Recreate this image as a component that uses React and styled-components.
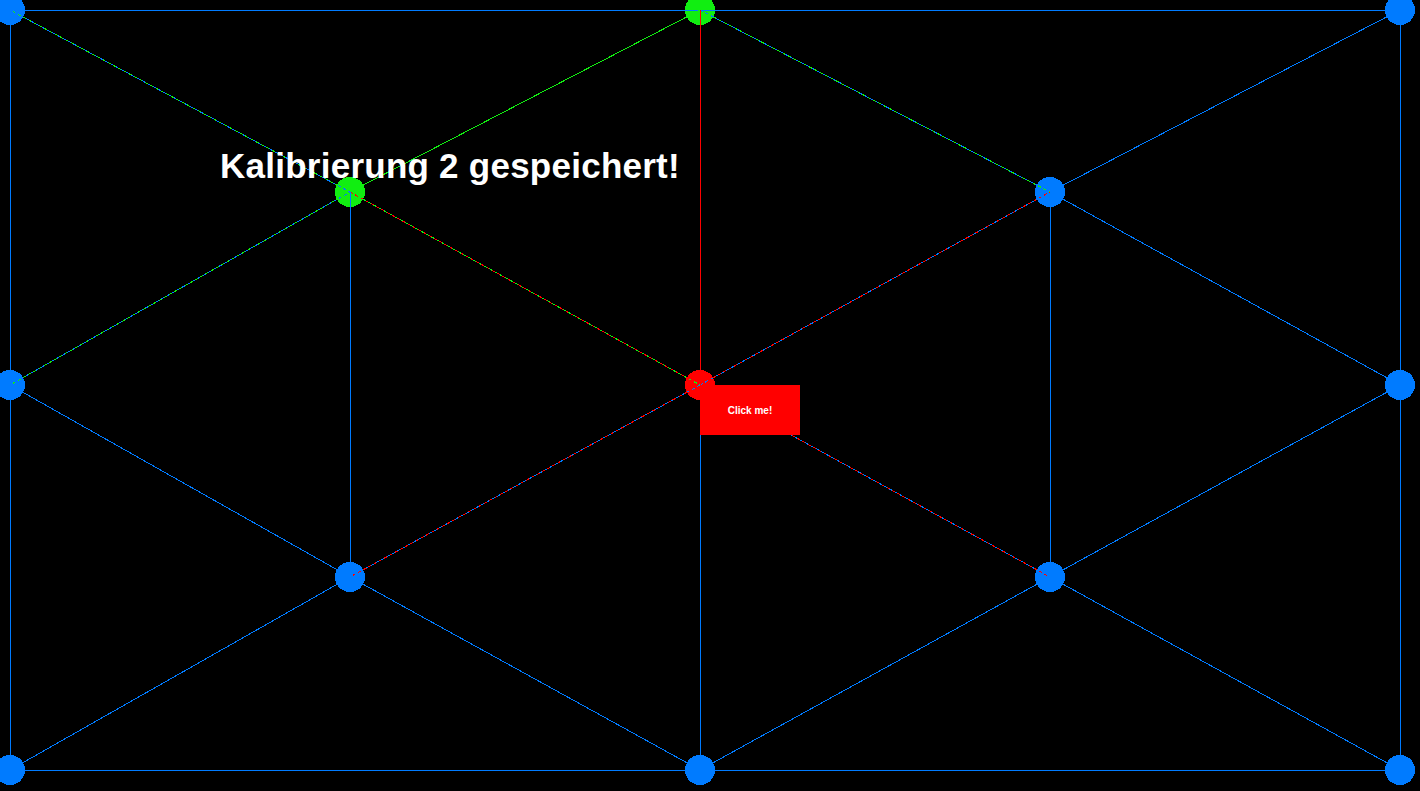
import React from "react";
import styled, { createGlobalStyle } from "styled-components";

const Global = createGlobalStyle`
  html, body { margin: 0; padding: 0; background: #000; }
  body { width: 1420px; height: 791px; overflow: hidden; font-family: "Liberation Sans", Arial, sans-serif; }
`;

const Stage = styled.div`
  position: relative;
  width: 1420px;
  height: 791px;
  background: #000;
`;

const Mesh = styled.svg`
  position: absolute;
  inset: 0;
  display: block;
`;

const Message = styled.div`
  position: absolute;
  left: ${(p) => p.$x}px;
  top: ${(p) => p.$y}px;
  color: #fff;
  font-family: "Liberation Sans", Arial, sans-serif;
  font-weight: bold;
  font-size: 35px;
  letter-spacing: 0.25px;
  line-height: 1;
  white-space: nowrap;
  -webkit-font-smoothing: none;
`;

const ClickButton = styled.button`
  position: absolute;
  left: ${(p) => p.$x}px;
  top: ${(p) => p.$y}px;
  width: 100px;
  height: 50px;
  margin: 0;
  padding: 0;
  border: none;
  background: #ff0000;
  color: #fff;
  font-family: "Liberation Sans", Arial, sans-serif;
  font-weight: bold;
  font-size: 10px;
  display: flex;
  align-items: center;
  justify-content: center;
  cursor: pointer;
`;

const COLORS = { b: "#007bff", g: "#11ee11", r: "#ff0000" };
const RANK = { b: 3, r: 2, g: 1 };

const nodes = {
  a: [10, 10, "b"], b: [700, 10, "g"], c: [1400, 10, "b"],
  d: [350, 192, "g"], e: [1050, 192, "b"],
  f: [10, 385, "b"], g: [700, 385, "r"], h: [1400, 385, "b"],
  i: [350, 577, "b"], j: [1050, 577, "b"],
  k: [10, 770, "b"], l: [700, 770, "b"], m: [1400, 770, "b"],
};

const edges = [
  "ab", "bc", "ch", "hm", "ml", "lk", "kf", "fa",
  "ad", "db", "be", "ec", "fd", "dg", "ge", "eh",
  "fi", "ig", "gj", "jh", "ki", "il", "lj", "jm",
  "di", "bg", "gl", "ej",
];

function Edge({ from, to }) {
  const [x1, y1, c1] = nodes[from];
  const [x2, y2, c2] = nodes[to];
  const top = RANK[c1] >= RANK[c2] ? c1 : c2;
  const other = top === c1 ? c2 : c1;
  const straight = x1 === x2 || y1 === y2;
  const mixed = !straight && other !== top;
  return (
    <g shapeRendering="crispEdges">
      {mixed && (
        <line x1={x1} y1={y1} x2={x2} y2={y2} stroke={COLORS[other]} strokeWidth="1" />
      )}
      <line
        x1={x1}
        y1={y1}
        x2={x2}
        y2={y2}
        stroke={COLORS[top]}
        strokeWidth="1"
        strokeDasharray={mixed ? "3 3" : undefined}
      />
    </g>
  );
}

export default function App() {
  return (
    <>
      <Global />
      <Stage>
        <Mesh width="1420" height="791" viewBox="0 0 1420 791">
          {Object.entries(nodes).map(([id, [x, y, c]]) => (
            <circle key={id} cx={x} cy={y} r="15" fill={COLORS[c]} shapeRendering="crispEdges" />
          ))}
          {edges.map((e) => (
            <Edge key={e} from={e[0]} to={e[1]} />
          ))}
        </Mesh>
        <Message $x={220} $y={148}>Kalibrierung 2 gespeichert!</Message>
        <ClickButton $x={700} $y={385}>Click me!</ClickButton>
      </Stage>
    </>
  );
}
